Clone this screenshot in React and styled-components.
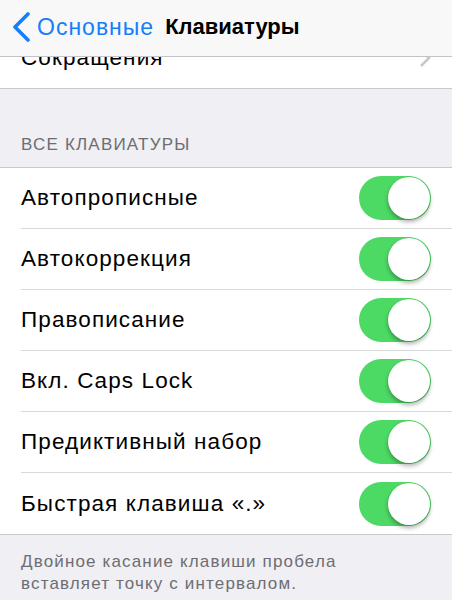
import React from 'react';
import styled, { createGlobalStyle } from 'styled-components';

const GlobalStyle = createGlobalStyle`
  html, body {
    margin: 0;
    padding: 0;
    background: #efeff4;
    font-family: "Liberation Sans", Arial, sans-serif;
    -webkit-font-smoothing: antialiased;
  }
`;

const settings = [
  'Автопрописные',
  'Автокоррекция',
  'Правописание',
  'Вкл. Caps Lock',
  'Предиктивный набор',
  'Быстрая клавиша «.»',
];

const App = () => {
  return (
    <Screen>
      <GlobalStyle />
      <NavBar>
        <BackButton>
          <svg width="20" height="30" viewBox="0 0 20 30">
            <path d="M17 2 L4 15 L17 28" fill="none" stroke="#157efb" strokeWidth="3.6" strokeLinecap="round" strokeLinejoin="round" />
          </svg>
          <BackLabel>Основные</BackLabel>
        </BackButton>
        <Title>Клавиатуры</Title>
      </NavBar>

      <Content>
        <Group>
          <Row last>
            <Label>Сокращения</Label>
            <svg width="12" height="20" viewBox="0 0 12 20">
              <path d="M2 2 L10 10 L2 18" fill="none" stroke="#c7c7cc" strokeWidth="2.5" />
            </svg>
          </Row>
        </Group>

        <SectionHeader>ВСЕ КЛАВИАТУРЫ</SectionHeader>

        <Group>
          {settings.map((name, i) => (
            <Row key={name} last={i === settings.length - 1}>
              <Label>{name}</Label>
              <Switch>
                <Knob />
              </Switch>
            </Row>
          ))}
        </Group>

        <Footer>
          Двойное касание клавиши пробела<br />
          вставляет точку с интервалом.
        </Footer>
      </Content>
    </Screen>
  );
};

const Screen = styled.div`
  position: relative;
  width: 452px;
  height: 600px;
  overflow: hidden;
  background: #efeff4;
`;

const NavBar = styled.div`
  position: absolute;
  top: 0;
  left: 0;
  right: 0;
  height: 57px;
  display: flex;
  align-items: center;
  padding: 0 0 2px 11px;
  box-sizing: border-box;
  background: #f8f8f8;
  border-bottom: 1px solid #c4c4c8;
  z-index: 2;
`;

const BackButton = styled.div`
  display: flex;
  align-items: center;
  gap: 6px;
`;

const BackLabel = styled.span`
  color: #157efb;
  font-size: 23px;
  letter-spacing: 1px;
`;

const Title = styled.span`
  margin-left: 11px;
  font-size: 22px;
  font-weight: bold;
  color: #000;
`;

const Content = styled.div`
  padding-top: 26px;
`;

const Group = styled.div`
  background: #fff;
  border-top: 1px solid #c8c7cc;
  border-bottom: 1px solid #c8c7cc;
`;

const Row = styled.div`
  height: 61px;
  margin-left: 21px;
  padding-right: 21px;
  display: flex;
  align-items: center;
  justify-content: space-between;
  box-sizing: border-box;
  border-bottom: ${p => (p.last ? 'none' : '1px solid #d9d9dc')};
`;

const Label = styled.span`
  font-size: 22.5px;
  letter-spacing: 1.1px;
  color: #000;
`;

const SectionHeader = styled.div`
  padding: 46px 21px 12px;
  font-size: 17px;
  letter-spacing: 1.2px;
  color: #6d6d72;
  line-height: 20px;
`;

const Switch = styled.div`
  width: 72px;
  height: 44px;
  border-radius: 22px;
  background: #4cd964;
  position: relative;
  flex-shrink: 0;
`;

const Knob = styled.div`
  position: absolute;
  top: 1px;
  right: 1px;
  width: 42px;
  height: 42px;
  border-radius: 50%;
  background: #fff;
  box-shadow: 0 3px 4px rgba(0, 0, 0, 0.3), 0 0 0 0.5px rgba(0, 0, 0, 0.08);
`;

const Footer = styled.div`
  padding: 16px 21px 12px;
  font-size: 17px;
  letter-spacing: 1.15px;
  line-height: 22px;
  color: #6d6d72;
`;

export default App;
